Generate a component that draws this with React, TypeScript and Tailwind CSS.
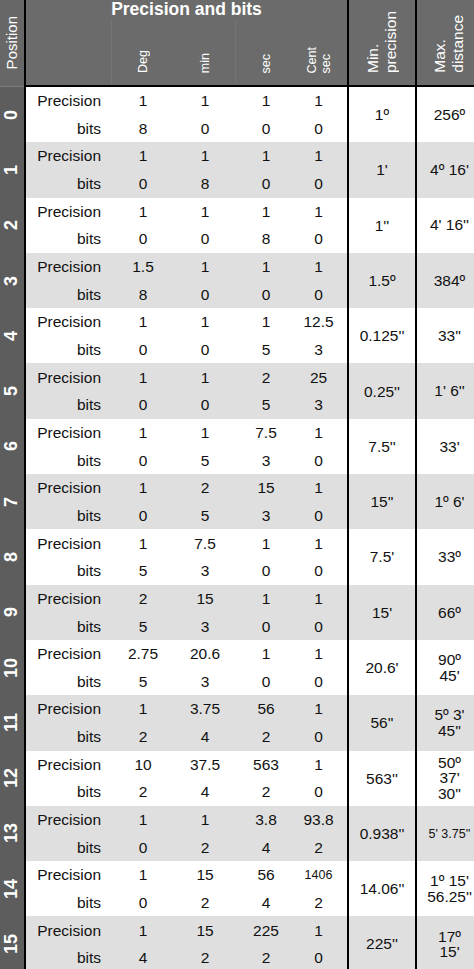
import React from "react";

type Row = {
  p: string[];
  b: string[];
  min: string;
  max: string[];
  maxSmall?: boolean;
  centSmall?: boolean;
};

const rows: Row[] = [
  { p: ["1", "1", "1", "1"], b: ["8", "0", "0", "0"], min: "1º", max: ["256º"] },
  { p: ["1", "1", "1", "1"], b: ["0", "8", "0", "0"], min: "1'", max: ["4º 16'"] },
  { p: ["1", "1", "1", "1"], b: ["0", "0", "8", "0"], min: "1''", max: ["4' 16''"] },
  { p: ["1.5", "1", "1", "1"], b: ["8", "0", "0", "0"], min: "1.5º", max: ["384º"] },
  { p: ["1", "1", "1", "12.5"], b: ["0", "0", "5", "3"], min: "0.125''", max: ["33''"] },
  { p: ["1", "1", "2", "25"], b: ["0", "0", "5", "3"], min: "0.25''", max: ["1' 6''"] },
  { p: ["1", "1", "7.5", "1"], b: ["0", "5", "3", "0"], min: "7.5''", max: ["33'"] },
  { p: ["1", "2", "15", "1"], b: ["0", "5", "3", "0"], min: "15''", max: ["1º 6'"] },
  { p: ["1", "7.5", "1", "1"], b: ["5", "3", "0", "0"], min: "7.5'", max: ["33º"] },
  { p: ["2", "15", "1", "1"], b: ["5", "3", "0", "0"], min: "15'", max: ["66º"] },
  { p: ["2.75", "20.6", "1", "1"], b: ["5", "3", "0", "0"], min: "20.6'", max: ["90º", "45'"] },
  { p: ["1", "3.75", "56", "1"], b: ["2", "4", "2", "0"], min: "56''", max: ["5º 3'", "45''"] },
  { p: ["10", "37.5", "563", "1"], b: ["2", "4", "2", "0"], min: "563''", max: ["50º", "37'", "30''"] },
  { p: ["1", "1", "3.8", "93.8"], b: ["0", "2", "4", "2"], min: "0.938''", max: ["5' 3.75''"], maxSmall: true },
  { p: ["1", "15", "56", "1406"], b: ["0", "2", "4", "2"], min: "14.06''", max: ["1º 15'", "56.25''"], centSmall: true },
  { p: ["1", "15", "225", "1"], b: ["4", "2", "2", "0"], min: "225''", max: ["17º", "15'"] },
];

function ValueCells({ vals, centSmall }: { vals: string[]; centSmall?: boolean }) {
  return (
    <>
      <div className="flex items-center justify-center">{vals[0]}</div>
      <div className="flex items-center justify-center">{vals[1]}</div>
      <div className="flex items-center justify-center">{vals[2]}</div>
      <div className={`flex items-center justify-center pr-[6px] ${centSmall ? "text-[12.5px]" : ""}`}>{vals[3]}</div>
    </>
  );
}

export default function App() {
  return (
    <div className="w-[474px] h-[969px] flex bg-white overflow-hidden font-['Liberation_Sans',Arial,sans-serif] text-[#111]">
      {/* Position column */}
      <div className="w-[26px] shrink-0 flex flex-col bg-[#5d5d5d] border-r-2 border-black">
        <div className="h-[87px] shrink-0 bg-[#676767] border-b border-[#7c7c7c] flex items-center justify-center pr-[2px]">
          <span className="block [writing-mode:vertical-rl] rotate-180 text-white text-[15px] leading-[17px]">Position</span>
        </div>
        {rows.map((_, i) => (
          <div key={i} className="h-[55.3px] shrink-0 flex items-center justify-center pr-[3px]">
            <span className="block [writing-mode:vertical-rl] rotate-180 text-white font-bold text-[18px] leading-none">{i}</span>
          </div>
        ))}
      </div>

      {/* Main table */}
      <div className="flex-1 flex flex-col">
        {/* Header */}
        <div className="h-[87px] shrink-0 flex bg-[#6b6b6b] border-b-2 border-black text-white">
          <div className="w-[321px] flex flex-col">
            <div className="h-[19px] shrink-0 text-center font-bold text-[17.5px] leading-[19.6px]">Precision and bits</div>
            <div className="flex-1 grid grid-cols-[86px_62px_62px_60px_51px]">
              <div className="border-r border-[#747474]"></div>
              <div className="flex items-end justify-center pb-[12px]">
                <span className="block [writing-mode:vertical-rl] rotate-180 text-[12.5px] leading-[14px]">Deg</span>
              </div>
              <div className="flex items-end justify-center pb-[12px] border-r border-[#747474]">
                <span className="block [writing-mode:vertical-rl] rotate-180 text-[12.5px] leading-[14px]">min</span>
              </div>
              <div className="flex items-end justify-center pb-[12px]">
                <span className="block [writing-mode:vertical-rl] rotate-180 text-[12.5px] leading-[14px]">sec</span>
              </div>
              <div className="flex items-end justify-center pb-[12px] pr-[6px]">
                <span className="block [writing-mode:vertical-rl] rotate-180 text-[12.5px] leading-[14px]">
                  Cent
                  <br />
                  sec
                </span>
              </div>
            </div>
          </div>
          <div className="w-[68px] border-l-2 border-black flex items-end justify-center pb-[12px]">
            <span className="block [writing-mode:vertical-rl] rotate-180 text-[15.5px] leading-[18px]">
              Min.
              <br />
              precision
            </span>
          </div>
          <div className="w-[59px] border-l-2 border-black flex items-end justify-center pb-[12px] pl-[6px]">
            <span className="block [writing-mode:vertical-rl] rotate-180 text-[15.5px] leading-[18px]">
              Max.
              <br />
              distance
            </span>
          </div>
        </div>

        {/* Body */}
        <div className="flex-1 flex flex-col text-[15.5px]">
          {rows.map((r, i) => (
            <div key={i} className={`h-[55.3px] shrink-0 flex ${i % 2 === 1 ? "bg-[#dfdfdf]" : "bg-white"}`}>
              <div className="w-[321px] grid grid-cols-[86px_62px_62px_60px_51px] grid-rows-2">
                <div className="flex items-center justify-end pr-[11px]">Precision</div>
                <ValueCells vals={r.p} centSmall={r.centSmall} />
                <div className="flex items-center justify-end pr-[11px]">bits</div>
                <ValueCells vals={r.b} />
              </div>
              <div className="w-[68px] border-l-2 border-black flex items-center justify-center whitespace-nowrap">
                {r.min}
              </div>
              <div
                className={`w-[59px] border-l-2 border-black flex flex-col items-center justify-center pl-[8px] whitespace-nowrap text-center ${
                  r.maxSmall ? "text-[12.5px] leading-[14px]" : "leading-[15.5px]"
                }`}
              >
                {r.max.map((m, k) => (
                  <span key={k} className="block">
                    {m}
                  </span>
                ))}
              </div>
            </div>
          ))}
        </div>
      </div>
    </div>
  );
}
